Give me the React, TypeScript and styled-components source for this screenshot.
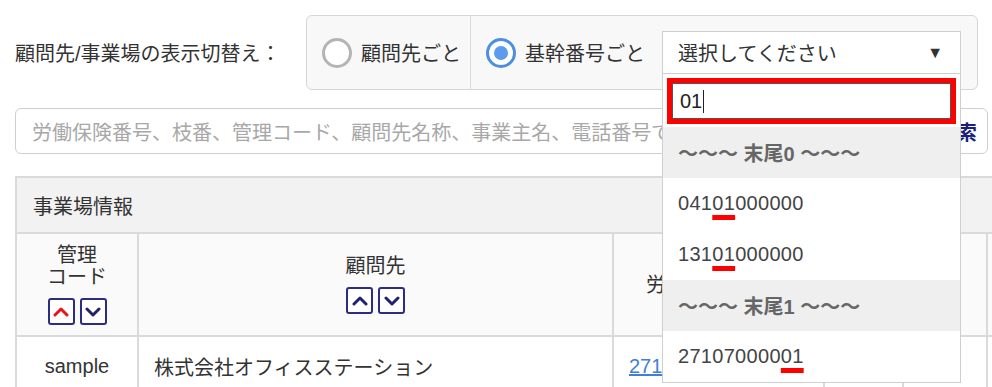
import React from 'react';
import styled, { createGlobalStyle } from 'styled-components';

const GlobalStyle = createGlobalStyle`
  body {
    margin: 0;
    background: #fff;
    overflow: hidden;
    font-family: "Liberation Sans", "Noto Sans CJK JP", sans-serif;
    font-size: 20px;
    color: #333;
  }
`;

const Page = styled.div`
  padding: 15px 0 0 15px;
  width: 1200px;
`;

const SwitchRow = styled.div`
  display: flex;
  align-items: center;
`;

const SwitchLabel = styled.div`
  width: 291px;
  white-space: nowrap;
`;

const RadioPanel = styled.div`
  display: flex;
  align-items: stretch;
  height: 75px;
  width: 672px;
  box-sizing: border-box;
  border: 1px solid #d6d6d6;
  border-radius: 6px;
  background: #f8f8f8;
`;

const RadioCell = styled.label<{ $width?: number; $divider?: boolean }>`
  display: flex;
  align-items: center;
  gap: 9px;
  padding: 0 15px;
  ${p => (p.$width ? `width: ${p.$width}px; box-sizing: border-box;` : '')}
  border-right: ${p => (p.$divider ? '1px solid #dcdcdc' : 'none')};
  white-space: nowrap;
`;

const RadioMark = styled.span<{ $checked?: boolean }>`
  width: 30px;
  height: 30px;
  flex-shrink: 0;
  box-sizing: border-box;
  border-radius: 50%;
  border: 3px solid ${p => (p.$checked ? '#4a8fe2' : '#b4b4b4')};
  background: #fff;
  display: flex;
  align-items: center;
  justify-content: center;
  &::after {
    content: '';
    display: ${p => (p.$checked ? 'block' : 'none')};
    width: 14px;
    height: 14px;
    border-radius: 50%;
    background: #5b9cec;
  }
`;

const SelectWrap = styled.div`
  position: relative;
  margin-left: 8px;
  width: 299px;
`;

const SelectBox = styled.div`
  height: 43px;
  box-sizing: border-box;
  border: 1px solid #cfcfcf;
  background: #fff;
  display: flex;
  align-items: center;
  justify-content: space-between;
  padding: 0 17px 0 15px;
`;

const Arrow = styled.span`
  font-size: 16px;
  color: #333;
`;

const Dropdown = styled.div`
  position: absolute;
  top: 100%;
  left: 0;
  right: 0;
  z-index: 10;
  background: #fff;
  border: 1px solid #cfcfcf;
  border-top: none;
`;

const FilterArea = styled.div`
  padding: 4px 4px 3px 4px;
`;

const FilterFrame = styled.div`
  border: 5px solid #ff0000;
`;

const FilterInput = styled.div`
  height: 36px;
  box-sizing: border-box;
  border: 1px solid #555;
  background: #fff;
  display: flex;
  align-items: center;
  padding-left: 7px;
  color: #222;
`;

const Caret = styled.span`
  display: inline-block;
  width: 1px;
  height: 23px;
  background: #222;
  margin-left: 1px;
`;

const Option = styled.div<{ $group?: boolean }>`
  height: 51px;
  display: flex;
  align-items: center;
  padding-left: 15px;
  background: ${p => (p.$group ? '#efefef' : '#fff')};
  color: ${p => (p.$group ? '#666' : '#444')};
  font-weight: ${p => (p.$group ? 'bold' : 'normal')};
  letter-spacing: ${p => (p.$group ? '0' : '0.3px')};
`;

const Hit = styled.span`
  text-decoration: underline;
  text-decoration-color: #ff0000;
  text-decoration-thickness: 5px;
  text-underline-offset: 5px;
`;

const SearchRow = styled.div`
  display: flex;
  margin-top: 18px;
  width: 973px;
  gap: 6px;
`;

const SearchInput = styled.div`
  flex: 1;
  height: 46px;
  box-sizing: border-box;
  border: 1px solid #cfcfcf;
  border-radius: 6px;
  display: flex;
  align-items: center;
  padding-left: 16px;
  color: #a8a8a8;
  white-space: nowrap;
  overflow: hidden;
`;

const SearchButton = styled.div`
  width: 62px;
  height: 46px;
  box-sizing: border-box;
  border: 1px solid #cfcfcf;
  border-radius: 6px;
  display: flex;
  align-items: center;
  justify-content: center;
  color: #1c1f7a;
  font-weight: bold;
`;

const Table = styled.table`
  margin-top: 22px;
  border-collapse: collapse;
  table-layout: fixed;
  width: 1100px;
  td, th {
    border: 2px solid #dadada;
    font-weight: normal;
  }
`;

const CaptionCell = styled.th`
  height: 54px;
  background: #f2f2f2;
  text-align: left;
  padding: 0 0 0 16px;
`;

const HeadCell = styled.th<{ $indent?: number }>`
  height: 101px;
  background: #fafafa;
  text-align: ${p => (p.$indent ? 'left' : 'center')};
  vertical-align: middle;
  line-height: 22px;
  padding: 0 0 0 ${p => p.$indent || 0}px;
  white-space: nowrap;
  overflow: hidden;
`;

const SortGroup = styled.div`
  display: flex;
  justify-content: center;
  gap: 5px;
  margin-top: 10px;
`;

const SortButton = styled.span`
  width: 27px;
  height: 27px;
  box-sizing: border-box;
  border: 2px solid #2b2e80;
  border-radius: 3px;
  background: #fff;
  display: flex;
  align-items: center;
  justify-content: center;
`;

const Cell = styled.td<{ $align?: string }>`
  height: 58px;
  text-align: ${p => p.$align || 'left'};
  padding: 0 15px;
  white-space: nowrap;
  overflow: hidden;
`;

const CodeLink = styled.a`
  color: #3f7fd8;
  text-decoration: underline;
`;

const Chevron = ({ up, color }: { up?: boolean; color: string }) => (
  <svg width="16" height="12" viewBox="0 0 16 12">
    <polyline
      points={up ? '2,9 8,3 14,9' : '2,3 8,9 14,3'}
      fill="none"
      stroke={color}
      strokeWidth="3"
      strokeLinecap="round"
      strokeLinejoin="round"
    />
  </svg>
);

const Sort = ({ activeUp }: { activeUp?: boolean }) => (
  <SortGroup>
    <SortButton><Chevron up color={activeUp ? '#e8141c' : '#1f2270'} /></SortButton>
    <SortButton><Chevron color="#1f2270" /></SortButton>
  </SortGroup>
);

const Highlight = ({ text, from, to }: { text: string; from: number; to: number }) => (
  <span>
    {text.slice(0, from)}
    <Hit>{text.slice(from, to)}</Hit>
    {text.slice(to)}
  </span>
);

const options = [
  { group: true, label: '〜〜〜 末尾0 〜〜〜' },
  { label: '04101000000', from: 3, to: 5 },
  { label: '13101000000', from: 3, to: 5 },
  { group: true, label: '〜〜〜 末尾1 〜〜〜' },
  { label: '27107000001', from: 9, to: 11 },
];

export default function App() {
  return (
    <Page>
      <GlobalStyle />
      <SwitchRow>
        <SwitchLabel>顧問先/事業場の表示切替え：</SwitchLabel>
        <RadioPanel>
          <RadioCell $width={164} $divider>
            <RadioMark />
            顧問先ごと
          </RadioCell>
          <RadioCell>
            <RadioMark $checked />
            基幹番号ごと
            <SelectWrap>
              <SelectBox>
                <span>選択してください</span>
                <Arrow>▼</Arrow>
              </SelectBox>
              <Dropdown>
                <FilterArea>
                  <FilterFrame>
                    <FilterInput>01<Caret /></FilterInput>
                  </FilterFrame>
                </FilterArea>
                {options.map(o =>
                  o.group ? (
                    <Option key={o.label} $group>{o.label}</Option>
                  ) : (
                    <Option key={o.label}>
                      <Highlight text={o.label} from={o.from!} to={o.to!} />
                    </Option>
                  )
                )}
              </Dropdown>
            </SelectWrap>
          </RadioCell>
        </RadioPanel>
      </SwitchRow>

      <SearchRow>
        <SearchInput>労働保険番号、枝番、管理コード、顧問先名称、事業主名、電話番号で検索</SearchInput>
        <SearchButton>検索</SearchButton>
      </SearchRow>

      <Table>
        <colgroup>
          <col style={{ width: 122 }} />
          <col style={{ width: 475 }} />
          <col style={{ width: 211 }} />
          <col style={{ width: 79 }} />
          <col style={{ width: 84 }} />
          <col style={{ width: 129 }} />
        </colgroup>
        <thead>
          <tr>
            <CaptionCell colSpan={6}>事業場情報</CaptionCell>
          </tr>
          <tr>
            <HeadCell>
              管理<br />コード
              <Sort activeUp />
            </HeadCell>
            <HeadCell>
              顧問先
              <Sort />
            </HeadCell>
            <HeadCell $indent={32}>労働保険番号</HeadCell>
            <HeadCell>成立</HeadCell>
            <HeadCell />
            <HeadCell />
          </tr>
        </thead>
        <tbody>
          <tr>
            <Cell $align="center">sample</Cell>
            <Cell>株式会社オフィスステーション</Cell>
            <Cell><CodeLink href="#">2710700000</CodeLink></Cell>
            <Cell $align="center">済</Cell>
            <Cell />
            <Cell />
          </tr>
        </tbody>
      </Table>
    </Page>
  );
}
